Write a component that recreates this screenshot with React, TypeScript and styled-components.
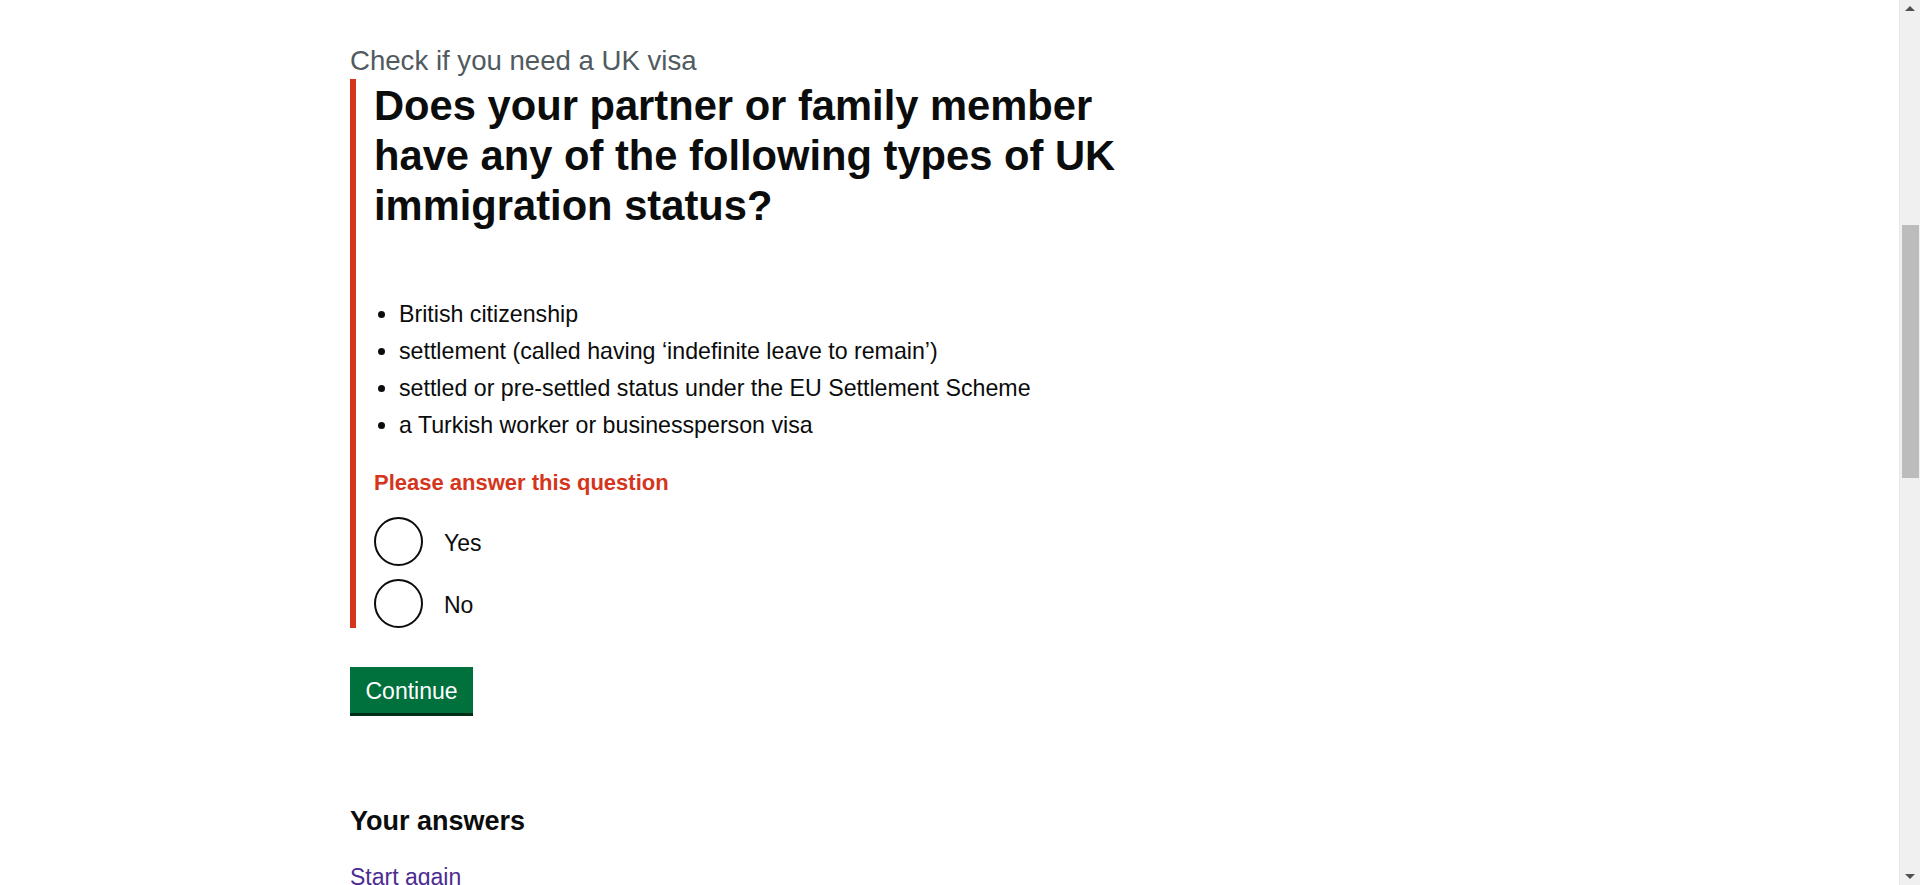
import React from "react";
import styled, { createGlobalStyle } from "styled-components";

const GlobalStyle = createGlobalStyle`
  html, body {
    margin: 0;
    padding: 0;
    height: 100%;
    overflow: hidden;
    background: #ffffff;
  }
  body {
    font-family: "Liberation Sans", Arial, Helvetica, sans-serif;
    color: #0b0c0c;
  }
`;

const Page = styled.div`
  display: flex;
  height: 100vh;
  width: 100vw;
  overflow: hidden;
`;

const Main = styled.main`
  flex: 1;
  display: flex;
  flex-direction: column;
  align-items: flex-start;
  padding: 46px 0 0 350px;
  overflow: hidden;
`;

const Caption = styled.span`
  display: block;
  font-size: 27.6px;
  line-height: 30px;
  color: #505a5f;
  margin: 0 0 3px;
`;

const ErrorGroup = styled.div`
  border-left: 6px solid #d4351c;
  padding: 2px 0 0 18px;
`;

const Heading = styled.h1`
  margin: 0 0 68px;
  max-width: 760px;
  font-size: 41.7px;
  line-height: 50px;
  font-weight: 700;
  color: #0b0c0c;
`;

const List = styled.ul`
  margin: 0 0 27px;
  padding: 0 0 0 25px;
  list-style: disc;
`;

const Item = styled.li`
  font-size: 23.2px;
  line-height: 31px;
  margin-bottom: 6px;
  &:last-child {
    margin-bottom: 0;
  }
`;

const ErrorMessage = styled.p`
  margin: 0 0 19px;
  font-size: 22px;
  line-height: 30px;
  font-weight: 700;
  color: #d4351c;
`;

const Radios = styled.div`
  display: flex;
  flex-direction: column;
  gap: 13px;
`;

const RadioItem = styled.label`
  display: flex;
  align-items: center;
  gap: 21px;
  cursor: pointer;
`;

const RadioCircle = styled.span`
  box-sizing: border-box;
  width: 49px;
  height: 49px;
  border: 2px solid #0b0c0c;
  border-radius: 50%;
  background: #ffffff;
  flex-shrink: 0;
`;

const RadioText = styled.span`
  font-size: 23px;
  line-height: 31px;
  padding-top: 4px;
`;

const Button = styled.button`
  margin-top: 39px;
  padding: 9px 15.5px 7px;
  border: 0;
  border-radius: 0;
  background: #00703c;
  color: #ffffff;
  font-family: inherit;
  font-size: 23px;
  line-height: 30px;
  box-shadow: 0 3px 0 #002d18;
  cursor: pointer;
`;

const SubHeading = styled.h2`
  margin: 93px 0 0;
  font-size: 27px;
  line-height: 30px;
  font-weight: 700;
`;

const Link = styled.a`
  margin-top: 26px;
  font-size: 23px;
  line-height: 30px;
  color: #4c2c92;
  text-decoration: underline;
  text-underline-offset: 2px;
`;

const Scrollbar = styled.div`
  box-sizing: border-box;
  width: 21px;
  flex-shrink: 0;
  display: flex;
  flex-direction: column;
  align-items: center;
  background: #f0f0f0;
  border-left: 1px solid #e8e8e8;
`;

const ArrowButton = styled.div`
  height: 17px;
  width: 100%;
  display: flex;
  align-items: center;
  justify-content: center;
`;

const Arrow = styled.span<{ $down?: boolean }>`
  width: 0;
  height: 0;
  border-left: 5px solid transparent;
  border-right: 5px solid transparent;
  ${(p) =>
    p.$down
      ? "border-top: 5px solid #505050;"
      : "border-bottom: 5px solid #505050;"}
`;

const TrackSpace = styled.div<{ $grow?: boolean }>`
  ${(p) => (p.$grow ? "flex: 1;" : "height: 208px;")}
`;

const Thumb = styled.div`
  width: 17px;
  height: 253px;
  background: #bcbcbc;
`;

const items = [
  "British citizenship",
  "settlement (called having \u2018indefinite leave to remain\u2019)",
  "settled or pre-settled status under the EU Settlement Scheme",
  "a Turkish worker or businessperson visa",
];

export default function App() {
  return (
    <>
      <GlobalStyle />
      <Page>
        <Main>
          <Caption>Check if you need a UK visa</Caption>
          <ErrorGroup>
            <Heading>
              Does your partner or family member have any of the following
              types of UK immigration status?
            </Heading>
            <List>
              {items.map((t) => (
                <Item key={t}>{t}</Item>
              ))}
            </List>
            <ErrorMessage>Please answer this question</ErrorMessage>
            <Radios>
              <RadioItem>
                <RadioCircle />
                <RadioText>Yes</RadioText>
              </RadioItem>
              <RadioItem>
                <RadioCircle />
                <RadioText>No</RadioText>
              </RadioItem>
            </Radios>
          </ErrorGroup>
          <Button type="button">Continue</Button>
          <SubHeading>Your answers</SubHeading>
          <Link href="#">Start again</Link>
        </Main>
        <Scrollbar>
          <ArrowButton>
            <Arrow />
          </ArrowButton>
          <TrackSpace />
          <Thumb />
          <TrackSpace $grow />
          <ArrowButton>
            <Arrow $down />
          </ArrowButton>
        </Scrollbar>
      </Page>
    </>
  );
}
